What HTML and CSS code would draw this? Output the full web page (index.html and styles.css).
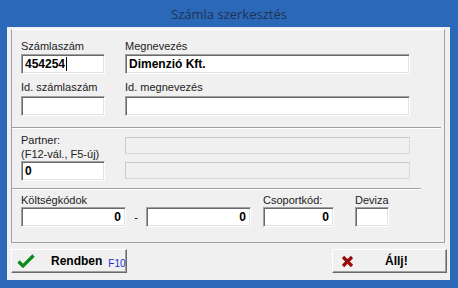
FILE: index.html
```html
<!DOCTYPE html>
<html lang="hu">
<head>
<meta charset="UTF-8">
<title>Számla szerkesztés</title>
<link rel="stylesheet" href="styles.css">
</head>
<body>
	<div class="window">
		<div class="titlebar">Számla szerkesztés</div>
		<div class="client">
			<div class="panel">
				<!-- szamlaszam, megnevezes -->
				<div class="section sec-top">
					<label class="lbl">Számlaszám</label>
					<label class="lbl">Megnevezés</label>
					<div class="inp">454254<span class="caret"></span></div>
					<div class="inp">Dimenzió Kft.</div>
					<label class="lbl lbl-gap">Id. számlaszám</label>
					<label class="lbl lbl-gap">Id. megnevezés</label>
					<div class="inp"></div>
					<div class="inp"></div>
				</div>
				<div class="sep"></div>
				<!-- partner -->
				<div class="section sec-partner">
					<div class="partner-left">
						<label class="lbl">Partner:</label>
						<label class="lbl">(F12-vál., F5-új)</label>
						<div class="inp">0</div>
					</div>
					<div class="partner-right">
						<div class="ro"></div>
						<div class="ro"></div>
					</div>
				</div>
				<div class="sep short"></div>
				<!-- koltsegkodok -->
				<div class="section sec-codes">
					<div class="code-group">
						<label class="lbl">Költségkódok</label>
						<div class="code-pair">
							<div class="inp num w105">0</div>
							<span class="dash">-</span>
							<div class="inp num w105">0</div>
						</div>
					</div>
					<div class="code-group grp-csop">
						<label class="lbl">Csoportkód:</label>
						<div class="inp num w71">0</div>
					</div>
					<div class="code-group grp-deviza">
						<label class="lbl">Deviza</label>
						<div class="inp w34"></div>
					</div>
				</div>
			</div>
			<div class="buttons">
				<div class="btn btn-ok">
					<svg class="ico" width="18" height="14" viewBox="0 0 18 14">
						<path d="M1.5 7.5 L6 12 L16.5 1.5" fill="none" stroke="#0c8a1c" stroke-width="3.2" stroke-linejoin="miter"/>
					</svg>
					<span class="btn-text">Rendben</span>
					<span class="hotkey">F10</span>
				</div>
				<div class="btn btn-cancel">
					<svg class="ico" width="13" height="13" viewBox="0 0 13 13">
						<path d="M2 2 L11 11 M11 2 L2 11" fill="none" stroke="#9a0a0a" stroke-width="3.2"/>
					</svg>
					<span class="btn-text">Állj!</span>
				</div>
			</div>
		</div>
	</div>
</body>
</html>
```

FILE: styles.css
```css
*{margin: 0;padding: 0;box-sizing: border-box;}
body{
	background: #2c68b8;
	font: 11px/14px "Liberation Sans", Arial, sans-serif;
	color: #000;
}
.window{
	width: 458px;
	height: 288px;
	background: #2c68b8;
	padding: 0 8px 8px 7px;
	display: flex;
	flex-direction: column;
}
.titlebar{
	height: 27px;
	font: 13px/28px "Open Sans", "Noto Sans", sans-serif;
	color: #1e3352;
	text-align: center;
	padding-left: 1px;
}
.client{
	flex: 1;
	background: #f0f0f0;
	padding: 2px 5px 0 4px;
	display: flex;
	flex-direction: column;
}
.panel{
	height: 214px;
	border: 1px solid #a0a0a0;
	border-top-color: #fff;
	display: flex;
	flex-direction: column;
}
.section{padding-left: 9px;}
.sep{
	height: 2px;
	margin-right: 3px;
	border-top: 1px solid #a0a0a0;
	border-bottom: 1px solid #fff;
}
.sep.short{margin-right: 23px;}

.lbl{display: block;height: 15px;line-height: 14px;color: #222;}
.lbl-gap{margin-top: 6px;}

/* sunken input */
.inp{
	height: 20px;
	background: #fff;
	border: 1px solid;
	border-color: #a0a0a0 #fff #fff #a0a0a0;
	box-shadow: inset 1px 1px 0 #696969, inset -1px -1px 0 #e3e3e3;
	font: bold 12px/18px "Liberation Sans", Arial, sans-serif;
	padding: 0 3px 0 3px;
	white-space: nowrap;
	overflow: hidden;
}
.inp.num{text-align: right;padding-right: 4px;}
.caret{
	display: inline-block;
	width: 1px;
	height: 14px;
	background: #000;
	vertical-align: -3px;
	margin-left: 1px;
}

.sec-top{
	height: 97px;
	padding-top: 9px;
	display: grid;
	grid-template-columns: 84px 285px;
	grid-template-rows: 15px 20px 22px 20px;
	column-gap: 20px;
}

.sec-partner{
	height: 59px;
	padding-top: 4px;
	display: flex;
	gap: 20px;
}
.partner-left{width: 84px;}
.partner-left .lbl{height: 14px;}
.partner-right{
	width: 285px;
	padding-top: 4px;
	display: flex;
	flex-direction: column;
	gap: 8px;
}
.ro{
	height: 17px;
	background: #f0f0f0;
	border: 1px solid #dadada;
	border-top-color: #c9c9c9;
	border-left-color: #c9c9c9;
}

.sec-codes{
	height: 52px;
	padding-top: 3px;
	display: flex;
}
.code-group .lbl{height: 14px;}
.code-pair{display: flex;}
.dash{width: 20px;text-align: center;line-height: 20px;}
.w105{width: 105px;}
.w71{width: 71px;}
.w34{width: 34px;}
.grp-csop{margin-left: 12px;}
.grp-deviza{margin-left: 21px;}

.buttons{
	display: flex;
	justify-content: space-between;
	padding: 6px 0 0 0;
}
.btn{
	height: 24px;
	background: #f0f0f0;
	border: 1px solid;
	border-color: #fff #696969 #696969 #fff;
	box-shadow: inset -1px -1px 0 #a0a0a0;
	display: flex;
	align-items: center;
	font: bold 12px/14px "Liberation Sans", Arial, sans-serif;
}
.btn-ok{width: 116px;padding-left: 5px;}
.btn-ok .btn-text{margin-left: 16px;}
.hotkey{
	font: 10px/10px "Liberation Sans", Arial, sans-serif;
	color: #1a2fcf;
	margin: 6px 0 0 6px;
}
.btn-cancel{width: 115px;margin-right: -2px;padding-left: 8px;}
.btn-cancel .btn-text{margin-left: 31px;}
```
